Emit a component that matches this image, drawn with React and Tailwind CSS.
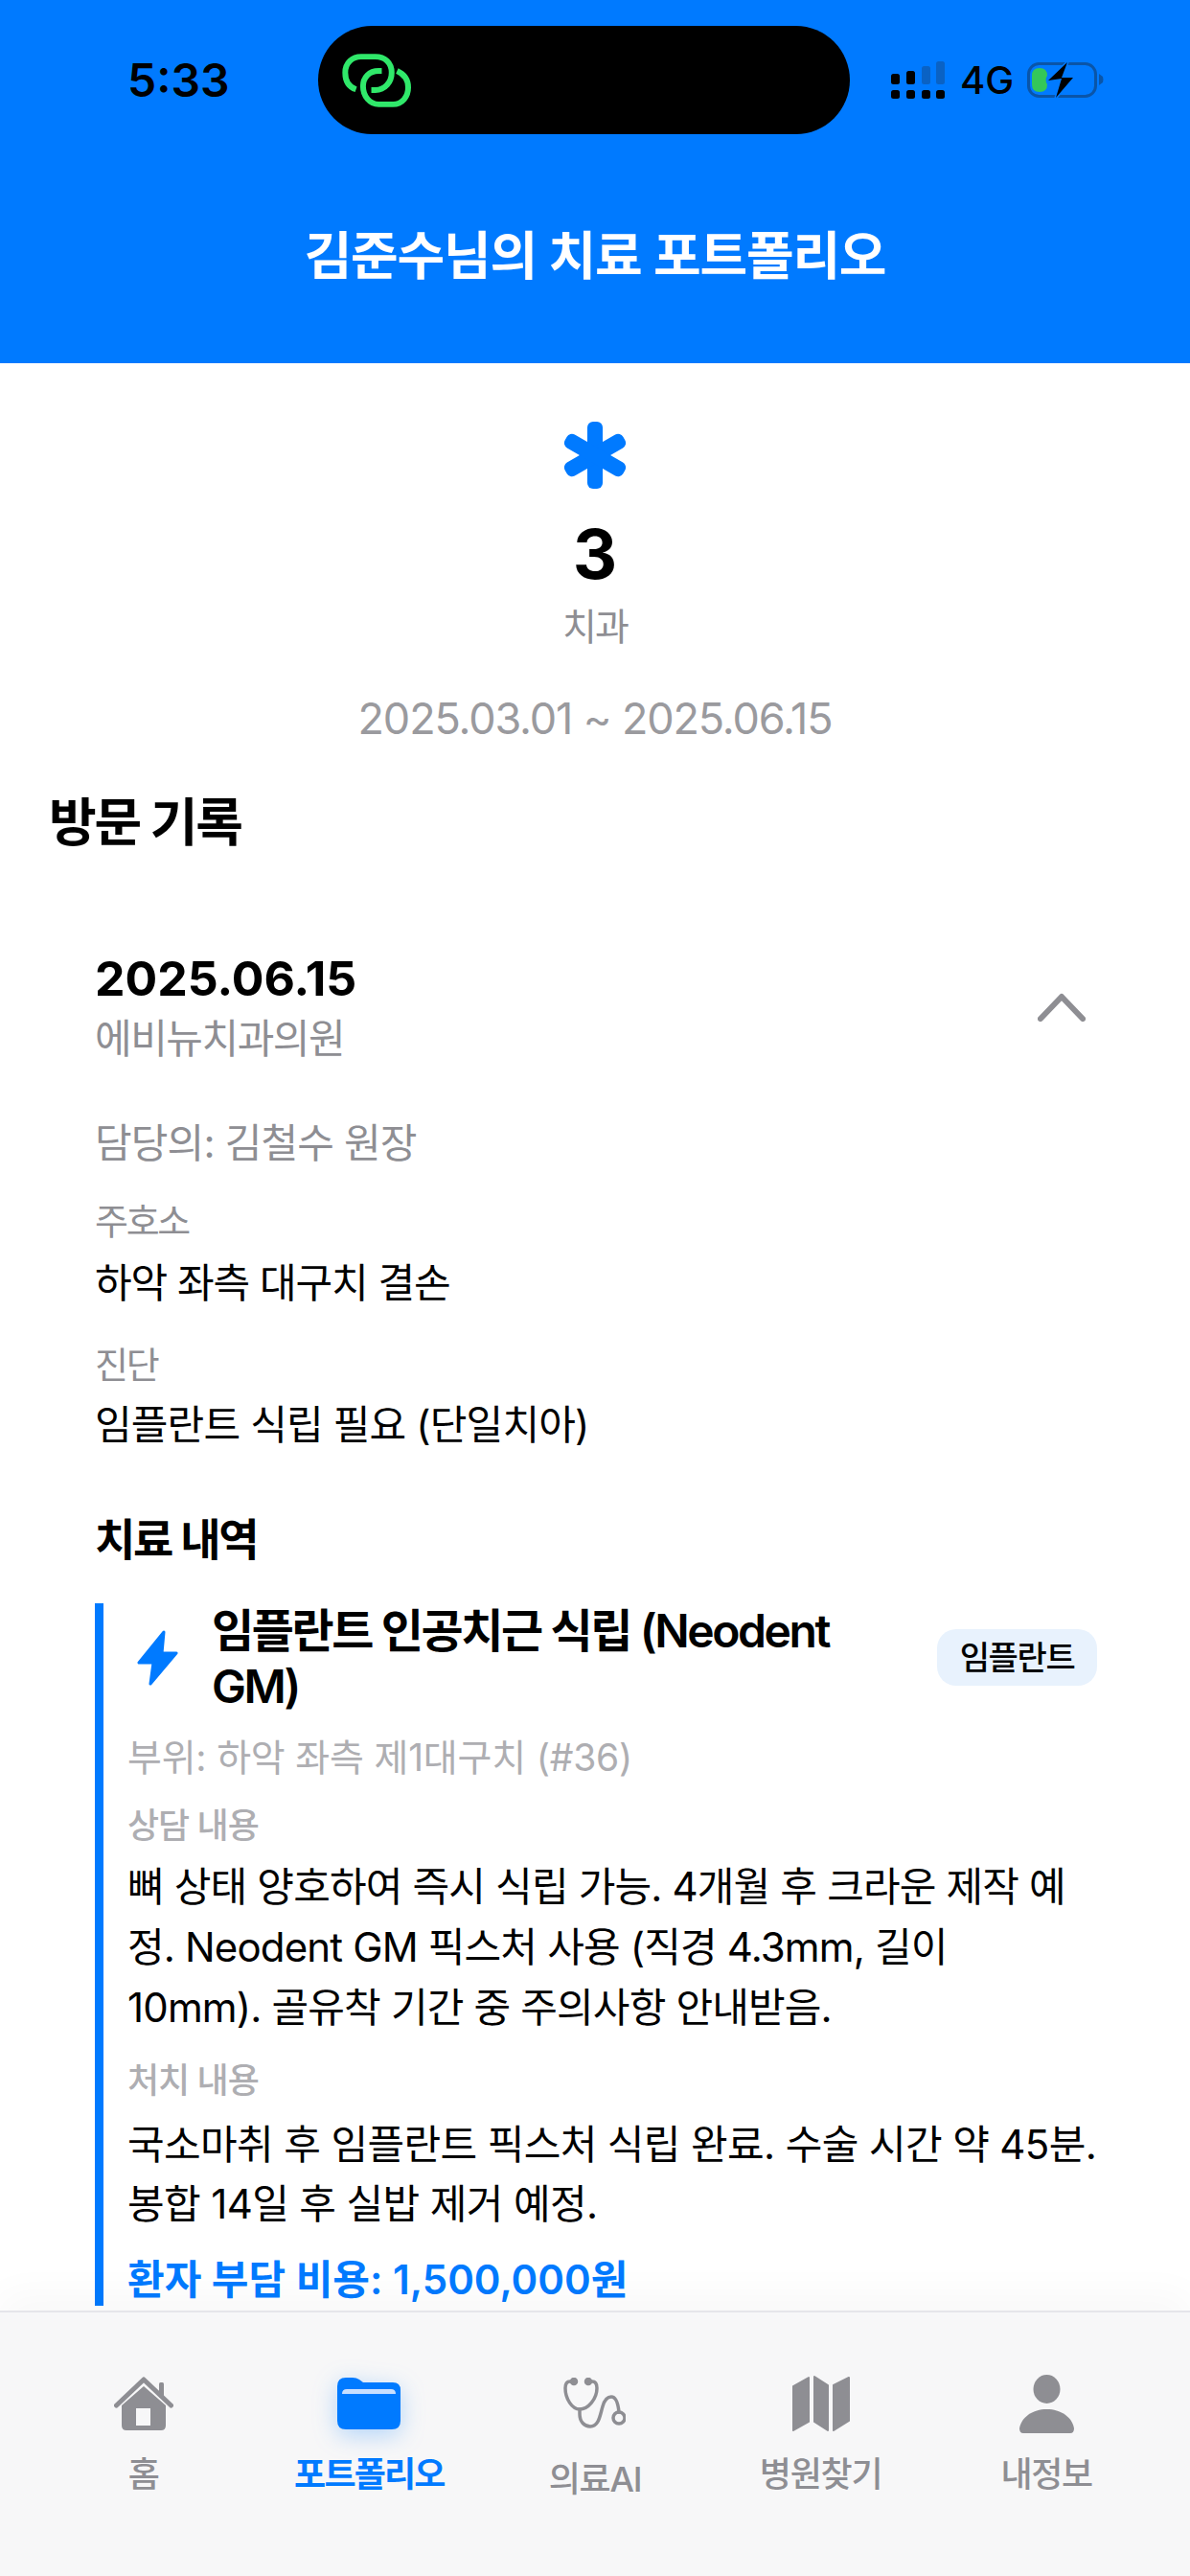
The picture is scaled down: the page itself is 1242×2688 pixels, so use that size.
import React from "react";

const FONT = "font-['Inter','Noto_Sans_CJK_KR',sans-serif]";

function SignalIcon() {
  return (
    <svg width="56" height="39" viewBox="0 0 56 39">
      <rect x="0" y="13" width="9" height="11" rx="2.5" fill="#000" />
      <rect x="16" y="10" width="9" height="14" rx="2.5" fill="#000" />
      <rect x="32" y="5" width="9" height="19" rx="2.5" fill="#0a62c4" />
      <rect x="47" y="0" width="9" height="24" rx="2.5" fill="#0a62c4" />
      <rect x="0" y="30" width="9" height="9" rx="2.5" fill="#000" />
      <rect x="16" y="30" width="9" height="9" rx="2.5" fill="#000" />
      <rect x="32" y="30" width="9" height="9" rx="2.5" fill="#000" />
      <rect x="47" y="30" width="9" height="9" rx="2.5" fill="#000" />
    </svg>
  );
}

function BatteryIcon() {
  return (
    <svg width="82" height="42" viewBox="0 0 82 42">
      <rect x="1.5" y="3.5" width="70" height="34" rx="11" fill="none" stroke="#0a55a8" strokeWidth="3" />
      <path d="M75 14 L79 17 Q80 20 79 23 L75 26 Z" fill="#0a55a8" />
      <path d="M13 8 Q21 8 21 16 Q18 20 21 25 Q21 33 13 33 Q5 33 5 25 V16 Q5 8 13 8 Z" fill="#34c759" />
      <path d="M42 2 L22 21 L36 19 L30 39 L48 18 L36 18 Z" fill="#000" stroke="#007aff" strokeWidth="3" paintOrder="stroke" strokeLinejoin="round" />
    </svg>
  );
}

function LinkIcon() {
  return (
    <svg width="73" height="60" viewBox="80 100 220 180" fill="none" stroke="#30e86a" strokeWidth="18" strokeLinecap="butt">
      <path d="M124 218 C100 210 90 190 90 165 C90 135 112 115 140 115 L185 115 C215 115 236 135 236 165 C236 195 215 220 185 220 L172 220" />
      <path d="M205 160 L195 160 C165 160 146 180 146 208 C146 240 168 265 195 265 L240 265 C270 265 288 240 288 212 C288 188 275 170 253 160" />
    </svg>
  );
}

function AsteriskIcon() {
  return (
    <svg width="68" height="70" viewBox="0 0 68 70" fill="#007aff">
      <rect x="26" y="0" width="16" height="70" rx="6" />
      <rect x="26" y="0" width="16" height="70" rx="6" transform="rotate(60 34 35)" />
      <rect x="26" y="0" width="16" height="70" rx="6" transform="rotate(-60 34 35)" />
    </svg>
  );
}

function BoltIcon() {
  return (
    <svg width="43" height="58" viewBox="0 0 43 58" className="mb-[3px] shrink-0">
      <path d="M28 2 L2 34 L17 34 L14 56 L41 24 L26 24 Z" fill="#007aff" stroke="#007aff" strokeWidth="3" strokeLinejoin="round" />
    </svg>
  );
}

function HomeIcon() {
  return (
    <svg width="62" height="56" viewBox="0 0 62 56" fill="#8e8e93">
      <path d="M2.5 30 L31 3 L59.5 30" fill="none" stroke="#8e8e93" strokeWidth="5" strokeLinecap="round" strokeLinejoin="round" />
      <rect x="47" y="6" width="5" height="16" rx="1.5" />
      <path fillRule="evenodd" d="M8 30 L31 10 L54 30 V51 Q54 56 49 56 H13 Q8 56 8 51 Z M23 33 V51 H38 V33 Z" />
    </svg>
  );
}

function FolderIcon() {
  return (
    <svg width="66" height="54" viewBox="0 0 66 54" className="drop-shadow-[0_6px_12px_rgba(0,122,255,0.28)]">
      <path d="M0 9 Q0 0 9 0 H16 Q20 0 23 2 L27 5 H58 Q66 5 66 13 V45 Q66 54 57 54 H9 Q0 54 0 45 Z" fill="#007aff" />
      <path d="M5 17 Q5 12 10 12 H56 Q61 12 61 17 Z" fill="#c8dfff" />
    </svg>
  );
}

function StethoscopeIcon() {
  return (
    <svg width="65" height="54" viewBox="0 0 65 54" fill="none" stroke="#8e8e93" strokeWidth="3.5" strokeLinecap="round">
      <path d="M10 4 H7 Q2 4 2 11 C2 22 9 33 17 33 C26 33 35 22 35 11 Q35 4 30 4 H27" />
      <circle cx="11" cy="4" r="2.5" fill="#8e8e93" />
      <circle cx="26" cy="4" r="2.5" fill="#8e8e93" />
      <path d="M17 33 V38 C17 46 22 51 28 51 C37 51 38 40 41 30 C43 23 46 20 50 20 C55 20 57 26 58 36" />
      <circle cx="58" cy="42" r="6" />
    </svg>
  );
}

function MapIcon() {
  return (
    <svg width="60" height="59" viewBox="0 0 60 59" fill="#8e8e93" stroke="#8e8e93" strokeWidth="2" strokeLinejoin="round">
      <path d="M1 11 L17 2 V48 L1 57 Z" />
      <path d="M23 1 L37 10 V57 L23 48 Z" />
      <path d="M43 10 L59 2 V47 L43 57 Z" />
    </svg>
  );
}

function PersonIcon() {
  return (
    <svg width="57" height="61" viewBox="0 0 57 61" fill="#8e8e93">
      <ellipse cx="28.5" cy="15" rx="14" ry="15" />
      <path d="M0 56 C2 44 14 36 28.5 36 C43 36 55 44 57 56 Q57 61 53 61 H4 Q0 61 0 56 Z" />
    </svg>
  );
}

function NavItem({ icon, label, active, labelClass }) {
  return (
    <div className="flex flex-col items-center">
      <div className="flex h-[62px] items-center justify-center">{icon}</div>
      <div
        className={`whitespace-nowrap text-[36px] leading-[44px] ${
          active ? "font-semibold text-[#007aff] tracking-[-0.05em]" : "font-medium text-[#8e8e93] tracking-[-0.035em]"
        } ${labelClass}`}
      >
        {label}
      </div>
    </div>
  );
}

export default function App() {
  return (
    <div className={`flex h-[2688px] w-[1242px] flex-col overflow-hidden bg-white ${FONT}`}>
      <header className="h-[379px] shrink-0 bg-[#007aff]">
        <div className="flex items-center pt-[27px]">
          <div className="w-[332px] pl-[133px] text-[48px] font-semibold leading-[113px] text-black">5:33</div>
          <div className="flex h-[113px] w-[555px] items-center rounded-full bg-black pl-[25px]">
            <LinkIcon />
          </div>
          <div className="flex items-center pl-[43px]">
            <SignalIcon />
            <span className="ml-[16px] text-[40px] font-medium leading-none text-black">4G</span>
            <span className="ml-[14px] flex"><BatteryIcon /></span>
          </div>
        </div>
        <h1 className="mt-[98px] text-center text-[54px] font-semibold leading-[60px] tracking-[-0.022em] text-white">
          김준수님의 치료 포트폴리오
        </h1>
      </header>

      <main className="min-h-0 flex-1 overflow-hidden pt-[61px]">
        <section className="flex flex-col items-center">
          <AsteriskIcon />
          <div className="mt-[28px] text-[72px] font-bold leading-[80px] text-black">3</div>
          <div className="mt-[11px] text-[39px] leading-[50px] tracking-[-0.05em] text-[#8e8e93]">치과</div>
          <div className="mt-[44px] text-[45px] leading-[54px] tracking-[-0.025em] text-[#9a9a9e]">2025.03.01 ~ 2025.06.15</div>
        </section>

        <h2 className="mt-[50px] pl-[51px] text-[54px] font-bold leading-[64px] tracking-[-0.04em] text-black">방문 기록</h2>

        <div className="mt-[101px] pl-[99px] pr-[97px]">
          <div className="flex items-center justify-between pr-[12px]">
            <div>
              <div className="text-[50px] font-bold leading-[58px] text-black">2025.06.15</div>
              <div className="mt-[9px] text-[42px] leading-[50px] tracking-[-0.035em] text-[#8e8e93]">에비뉴치과의원</div>
            </div>
            <svg width="50" height="30" viewBox="0 0 50 30" fill="none" stroke="#8e8e93" strokeWidth="6" strokeLinecap="round" strokeLinejoin="round">
              <path d="M3 27 L25 4 L47 27" />
            </svg>
          </div>

          <div>
            <div className="mt-[59px] text-[42px] leading-[50px] tracking-[-0.02em] text-[#8e8e93]">담당의: 김철수 원장</div>
            <div className="mt-[34px] text-[38px] leading-[44px] tracking-[-0.06em] text-[#8e8e93]">주호소</div>
            <div className="mt-[15px] text-[42px] leading-[56px] tracking-[-0.025em] text-black">하악 좌측 대구치 결손</div>
            <div className="mt-[35px] text-[38px] leading-[44px] tracking-[-0.06em] text-[#8e8e93]">진단</div>
            <div className="mt-[13px] text-[42px] leading-[56px] tracking-[-0.02em] text-black">임플란트 식립 필요 (단일치아)</div>
            <h3 className="mt-[61px] text-[46px] font-semibold leading-[60px] tracking-[-0.05em] text-black">치료 내역</h3>
          </div>

          <article className="mt-[37px] border-l-[9px] border-[#007aff] pl-[25px]">
            <div className="flex items-center pl-[10px]">
              <BoltIcon />
              <div className="ml-[35px] min-w-0 flex-1 text-[48px] font-semibold leading-[58px] tracking-[-0.05em] text-black">
                임플란트 인공치근 식립 (Neodent GM)
              </div>
              <div className="mb-[3px] ml-[28px] flex h-[59px] w-[167px] shrink-0 items-center justify-center rounded-[20px] bg-[#e8f2fd] text-[34px] font-medium tracking-[-0.04em] text-black">
                임플란트
              </div>
            </div>
            <div className="mt-[20px] text-[39px] leading-[50px] tracking-[-0.005em] text-[#aeaeb2]">부위: 하악 좌측 제1대구치 (#36)</div>
            <div className="mt-[24px] text-[36px] font-medium leading-[44px] tracking-[-0.03em] text-[#aeaeb2]">상담 내용</div>
            <p className="mt-[10px] pr-[12px] text-[42px] leading-[63px] tracking-[-0.02em] text-black">
              뼈 상태 양호하여 즉시 식립 가능. 4개월 후 크라운 제작 예정. Neodent GM 픽스처 사용 (직경 4.3mm, 길이 10mm). 골유착 기간 중 주의사항 안내받음.
            </p>
            <div className="mt-[23px] text-[36px] font-medium leading-[44px] tracking-[-0.03em] text-[#aeaeb2]">처치 내용</div>
            <p className="mt-[14px] text-[42px] leading-[62px] tracking-[-0.015em] text-black">
              국소마취 후 임플란트 픽스처 식립 완료. 수술 시간 약 45분. 봉합 14일 후 실밥 제거 예정.
            </p>
            <div className="mt-[21px] text-[42px] font-semibold leading-[54px] text-[#007aff]">환자 부담 비용: 1,500,000원</div>
          </article>
        </div>
      </main>

      <nav className="relative grid h-[277px] shrink-0 grid-cols-5 border-t-2 border-[#e5e5ea] bg-[#f7f7f8] px-[32px] pt-[64px] shadow-[0_-16px_40px_rgba(0,0,0,0.03)]">
        <NavItem icon={<HomeIcon />} label="홈" labelClass="mt-[21px]" />
        <NavItem icon={<FolderIcon />} label="포트폴리오" active labelClass="mt-[21px]" />
        <NavItem icon={<StethoscopeIcon />} label="의료AI" labelClass="mt-[26px]" />
        <NavItem icon={<MapIcon />} label="병원찾기" labelClass="mt-[21px]" />
        <NavItem icon={<PersonIcon />} label="내정보" labelClass="mt-[21px]" />
      </nav>
    </div>
  );
}
